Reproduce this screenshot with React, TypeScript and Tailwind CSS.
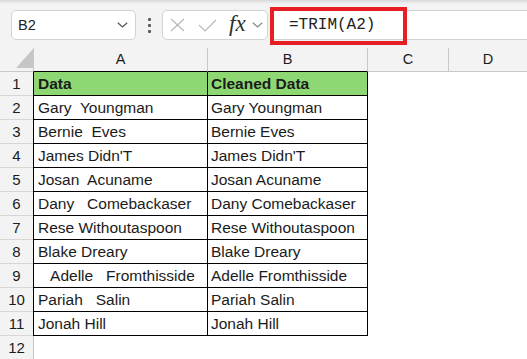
import React from "react";

const rows: [string, string][] = [
  ["Data", "Cleaned Data"],
  ["Gary  Youngman", "Gary Youngman"],
  ["Bernie  Eves", "Bernie Eves"],
  ["James Didn'T", "James Didn'T"],
  ["Josan  Acuname", "Josan Acuname"],
  ["Dany   Comebackaser", "Dany Comebackaser"],
  ["Rese Withoutaspoon", "Rese Withoutaspoon"],
  ["Blake Dreary", "Blake Dreary"],
  ["   Adelle   Fromthisside", "Adelle Fromthisside"],
  ["Pariah   Salin", "Pariah Salin"],
  ["Jonah Hill", "Jonah Hill"],
];

function Chevron({ color }: { color: string }) {
  return (
    <svg width="11" height="6" viewBox="0 0 11 6" fill="none">
      <polyline points="0.8,0.8 5.5,5 10.2,0.8" stroke={color} strokeWidth="1.2" />
    </svg>
  );
}

export default function App() {
  return (
    <div className="w-[527px] h-[359px] overflow-hidden bg-white font-['Liberation_Sans',Arial,sans-serif] text-[#1b1b1b]">
      {/* Toolbar */}
      <div className="relative h-[48px] bg-[#f3f3f3] flex items-start pt-[10px] pl-[11px]">
        <div className="absolute inset-x-0 top-0 h-[4px] bg-gradient-to-b from-[#d8d8d8] to-[#f3f3f3]" />
        {/* Name box */}
        <div className="w-[125px] h-[30px] rounded-[5px] border border-[#d3d3d3] bg-white flex items-center justify-between pl-[6px] pr-[7px]">
          <span className="text-[14.5px] leading-none text-[#222]">B2</span>
          <Chevron color="#555" />
        </div>
        {/* Dots */}
        <div className="h-[30px] ml-[12px] flex flex-col justify-center gap-[3px]">
          <div className="w-[3px] h-[3px] bg-[#5a5a5a] rounded-[1px]" />
          <div className="w-[3px] h-[3px] bg-[#5a5a5a] rounded-[1px]" />
          <div className="w-[3px] h-[3px] bg-[#5a5a5a] rounded-[1px]" />
        </div>
        {/* fx box */}
        <div className="ml-[11px] w-[106px] h-[30px] rounded-[5px] border border-[#d3d3d3] bg-white flex items-center pl-[7px]">
          <svg width="15" height="14" viewBox="0 0 15 14" fill="none">
            <line x1="1" y1="1" x2="14" y2="13" stroke="#b9b9b9" strokeWidth="1.2" />
            <line x1="14" y1="1" x2="1" y2="13" stroke="#b9b9b9" strokeWidth="1.2" />
          </svg>
          <svg className="ml-[13px]" width="19" height="13" viewBox="0 0 19 13" fill="none">
            <polyline points="1,6 7,12 18,1" stroke="#b9b9b9" strokeWidth="1.2" />
          </svg>
          <span className="ml-[12px] font-['Liberation_Serif',serif] italic text-[23px] leading-none text-[#2e2e2e] -mt-[3px]">
            fx
          </span>
          <span className="ml-[6px]">
            <Chevron color="#888" />
          </span>
        </div>
        {/* formula input */}
        <div className="ml-[2px] flex-1 h-[30px] border border-r-0 border-[#d3d3d3] rounded-l-[5px] bg-white flex items-center pl-[18px]">
          <span className="font-['Liberation_Mono',monospace] text-[16px] leading-none text-[#222]">=TRIM(A2)</span>
        </div>
        {/* red annotation */}
        <div className="absolute left-[270px] top-[7px] w-[137px] h-[38px] border-[4px] border-[#e81e25]" />
      </div>

      {/* Column header row */}
      <div className="flex h-[24px] bg-[#f3f3f3]">
        <div className="w-[33px] flex items-end justify-end pb-[3px] border-b border-[#c8c8c8]">
          <svg width="17" height="19" viewBox="0 0 17 19">
            <polygon points="17,0 17,19 0,19" fill="#c6c6c6" />
          </svg>
        </div>
        <div className="w-[175px] border-l border-r border-[#c8c8c8] border-b border-b-black text-center text-[14.5px] leading-[23px]">A</div>
        <div className="w-[160px] border-r border-[#c8c8c8] border-b border-b-black text-center text-[14.5px] leading-[23px]">B</div>
        <div className="w-[81px] border-r border-b border-[#c8c8c8] text-center text-[14.5px] leading-[23px]">C</div>
        <div className="flex-1 border-b border-[#c8c8c8] text-center text-[14.5px] leading-[23px]">D</div>
      </div>

      {/* Data rows */}
      {rows.map(([a, b], i) => {
        const head = i === 0;
        return (
          <div key={i} className="flex h-[24px]">
            <div className="w-[33px] bg-[#f3f3f3] border-b border-[#d6d6d6] text-center text-[15px] leading-[22px] pt-[1px]">
              {i + 1}
            </div>
            <div
              className={`w-[175px] border-l border-r border-b border-black pl-[4px] text-[15.5px] leading-[22px] pt-[1px] whitespace-pre overflow-hidden ${
                head ? "bg-[#8ed873] font-bold" : ""
              }`}
            >
              {a}
            </div>
            <div
              className={`w-[160px] border-r border-b border-black pl-[3px] text-[15.5px] leading-[22px] pt-[1px] whitespace-pre overflow-hidden ${
                head ? "bg-[#8ed873] font-bold" : ""
              }`}
            >
              {b}
            </div>
            <div className="flex-1" />
          </div>
        );
      })}

      {/* Row 12 */}
      <div className="flex h-[24px]">
        <div className="w-[33px] bg-[#f3f3f3] border-b border-[#d6d6d6] text-center text-[15px] leading-[22px] pt-[1px]">12</div>
        <div className="w-[175px] border-l border-[#c8c8c8]" />
        <div className="flex-1" />
      </div>
    </div>
  );
}
